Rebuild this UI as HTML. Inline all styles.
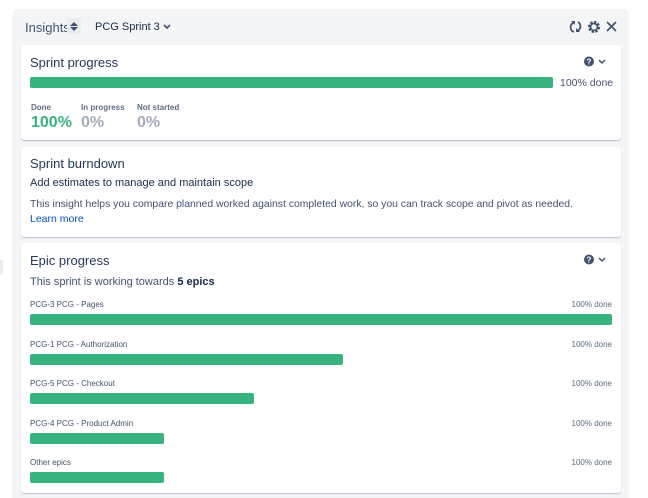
<!DOCTYPE html>
<html><head><style>
*{margin:0;padding:0;box-sizing:border-box}
html,body{width:648px;height:498px;overflow:hidden}
body{background:#fff;font-family:"Liberation Sans",sans-serif;position:relative;color:#172b4d}
.panel{position:absolute;left:12px;top:9px;width:617px;height:500px;background:#f4f5f7;border-radius:6px}
.card{position:absolute;left:21px;width:600px;background:#fff;border-radius:3px;box-shadow:0 1px 1px rgba(9,30,66,.25)}
.a{position:absolute;white-space:nowrap}
.bar{position:absolute;height:11px;background:#36b37e;border-radius:2px}
.h{font-size:13px;color:#253858}
.lab{font-size:8px;color:#42526e}
.pd{font-size:8px;color:#5e6c84}
</style></head><body>
<div class="panel"></div>
<div class="a" style="left:25px;top:20px;font-size:13px;color:#42526e">Insights</div>
<div class="a" style="left:67px;top:18px;width:14px;height:16px;background:#ebecf0;border-radius:2px"></div>
<svg class="a" style="left:69px;top:21px" width="10" height="11"><path d="M1 5 L5 1 L9 5Z M1 6 L5 10 L9 6Z" fill="#42526e"/></svg>
<div class="a" style="left:95px;top:21px;font-size:11px;color:#172b4d">PCG Sprint 3</div>
<svg class="a" style="left:163px;top:24px" width="8" height="6"><path d="M1 1 L4 4 L7 1" stroke="#42526e" stroke-width="1.6" fill="none"/></svg>
<svg class="a" style="left:569px;top:19px" width="50" height="16"><path d="M4 4 A5 5 0 0 0 5 13 M9 3 A5 5 0 0 1 8 12" stroke="#42526e" stroke-width="1.8" fill="none"/><path d="M2 2 L6 2 L6 6Z M11 13 L7 13 L7 9Z" fill="#42526e"/><circle cx="25" cy="8" r="4.5" fill="none" stroke="#42526e" stroke-width="3" stroke-dasharray="2.2 1.3"/><circle cx="25" cy="8" r="3.5" fill="none" stroke="#42526e" stroke-width="1.6"/><path d="M38 3 L47 12 M47 3 L38 12" stroke="#42526e" stroke-width="1.7"/></svg>

<div class="card" style="top:45px;height:95px"></div>
<div class="a h" style="left:30px;top:55px">Sprint progress</div>
<svg class="a" style="left:584px;top:56px" width="24" height="12"><circle cx="5" cy="5.5" r="5" fill="#42526e"/><text x="5" y="8.5" font-size="8" font-weight="bold" fill="#fff" text-anchor="middle" font-family="Liberation Sans">?</text><path d="M15 4 L18 7 L21 4" stroke="#42526e" stroke-width="1.5" fill="none"/></svg>
<div class="bar" style="left:30px;top:77px;width:523px"></div>
<div class="a" style="left:560px;top:77px;font-size:10.5px;color:#42526e">100% done</div>
<div class="a" style="left:31px;top:103px;font-size:8px;font-weight:bold;color:#5e6c84">Done</div>
<div class="a" style="left:81px;top:103px;font-size:8px;font-weight:bold;color:#5e6c84">In progress</div>
<div class="a" style="left:137px;top:103px;font-size:8px;font-weight:bold;color:#5e6c84">Not started</div>
<div class="a" style="left:31px;top:114px;font-size:16px;font-weight:bold;color:#36b37e">100%</div>
<div class="a" style="left:81px;top:114px;font-size:16px;font-weight:bold;color:#a5adba">0%</div>
<div class="a" style="left:137px;top:114px;font-size:16px;font-weight:bold;color:#a5adba">0%</div>

<div class="card" style="top:147px;height:90px"></div>
<div class="a h" style="left:30px;top:156px">Sprint burndown</div>
<div class="a" style="left:30px;top:177px;font-size:11px;color:#172b4d">Add estimates to manage and maintain scope</div>
<div class="a" style="left:30px;top:199px;font-size:10.4px;color:#42526e">This insight helps you compare planned worked against completed work, so you can track scope and pivot as needed.</div>
<div class="a" style="left:30px;top:213px;font-size:10.5px;color:#0052cc">Learn more</div>

<div class="card" style="top:243px;height:250px"></div>
<div class="a h" style="left:30px;top:253px">Epic progress</div>
<svg class="a" style="left:584px;top:254px" width="24" height="12"><circle cx="5" cy="5.5" r="5" fill="#42526e"/><text x="5" y="8.5" font-size="8" font-weight="bold" fill="#fff" text-anchor="middle" font-family="Liberation Sans">?</text><path d="M15 4 L18 7 L21 4" stroke="#42526e" stroke-width="1.5" fill="none"/></svg>
<div class="a" style="left:30px;top:276px;font-size:11px;color:#42526e">This sprint is working towards <b style="color:#172b4d">5 epics</b></div>

<div class="a lab" style="left:30px;top:300px">PCG-3 PCG - Pages</div><div class="a pd" style="right:36px;top:300px">100% done</div>
<div class="bar" style="left:30px;top:314px;width:582px"></div>
<div class="a lab" style="left:30px;top:340px">PCG-1 PCG - Authorization</div><div class="a pd" style="right:36px;top:340px">100% done</div>
<div class="bar" style="left:30px;top:354px;width:313px"></div>
<div class="a lab" style="left:30px;top:379px">PCG-5 PCG - Checkout</div><div class="a pd" style="right:36px;top:379px">100% done</div>
<div class="bar" style="left:30px;top:393px;width:224px"></div>
<div class="a lab" style="left:30px;top:419px">PCG-4 PCG - Product Admin</div><div class="a pd" style="right:36px;top:419px">100% done</div>
<div class="bar" style="left:30px;top:433px;width:134px"></div>
<div class="a lab" style="left:30px;top:458px">Other epics</div><div class="a pd" style="right:36px;top:458px">100% done</div>
<div class="bar" style="left:30px;top:472px;width:134px"></div>
<div class="a" style="left:0;top:260px;width:3px;height:14px;background:#ebecf0"></div>
</body></html>
